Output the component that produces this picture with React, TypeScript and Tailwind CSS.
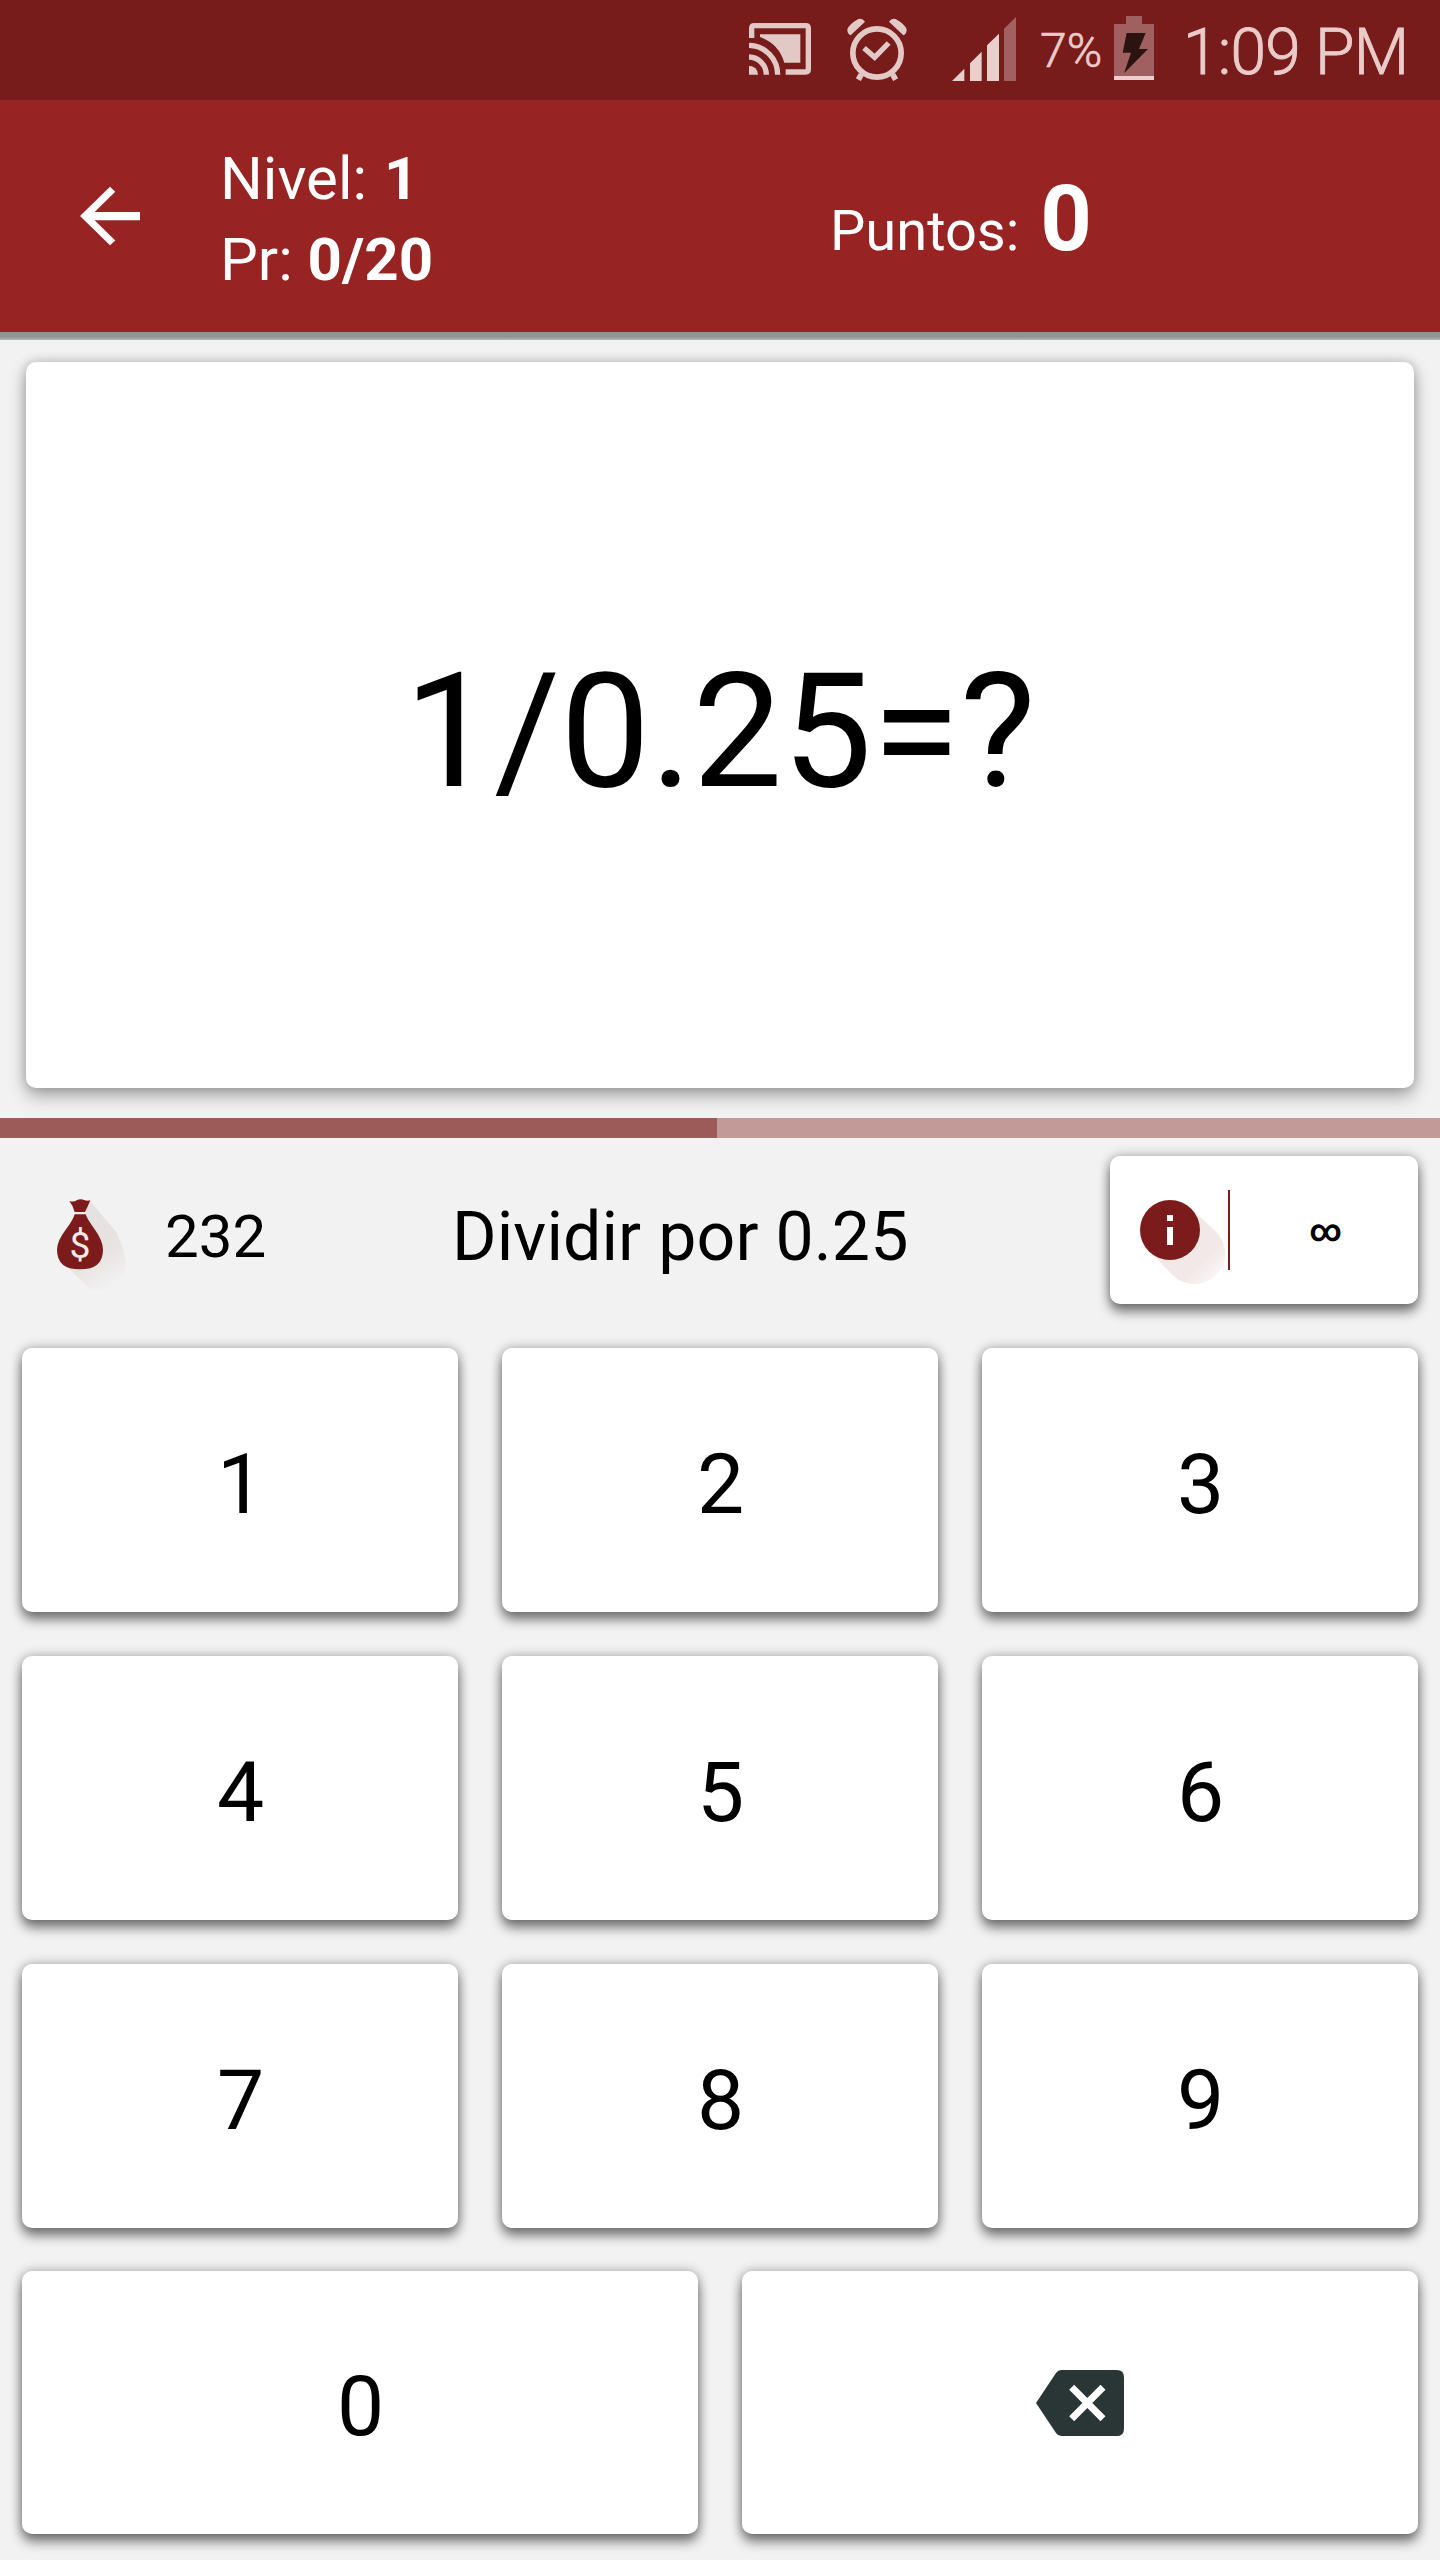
import React, { useState } from 'react';

const CARD = 'bg-white rounded-[10px]';
const RAISED = 'shadow-[0_8px_12px_rgba(0,0,0,0.46),0_0_12px_rgba(0,0,0,0.3)]';

const CastIcon: React.FC = () => (
    <svg className="w-[62px] h-[52px]" viewBox="57 70 186 156" fill="none" stroke="#e3c9c6" strokeWidth="16">
        <path d="M65 115V86q0-8 8-8h154q8 0 8 8v123q0 8-8 8h-60" />
        <path d="M90 104h121v85h-48Q146 132 90 112z" fill="#e3c9c6" stroke="none" />
        <path d="M57 198a27 27 0 0 1 27 27H57z" fill="#e3c9c6" stroke="none" />
        <path d="M57 172a53 53 0 0 1 52 53M57 137a88 88 0 0 1 86 88" />
    </svg>
);

const AlarmIcon: React.FC = () => (
    <svg className="w-[60px] h-[63px]" viewBox="351 53 180 189" fill="none" stroke="#e3c9c6">
        <circle cx="441" cy="158" r="72.5" strokeWidth="17" />
        <path d="M402 143l32 28 42-43" strokeWidth="16" />
        <path d="M394 222l-9 16M488 222l9 16" strokeWidth="17" />
        <path d="M352 87q5-15 33-31q12-4 20 8l-43 41q-10-3-10-18zM530 87q-5-15-33-31q-12-4-20 8l43 41q10-3 10-18z" fill="#e3c9c6" stroke="none" />
    </svg>
);

const SignalIcon: React.FC = () => (
    <svg className="w-[64px] h-[64px]" viewBox="666 51 192 192" fill="#e9cfcc">
        <path d="M666 243l37-37v37zM720 243v-53l35-35v88zM771 243V136l36-35v142z" />
        <path d="M822 243V86l36-35v192z" fill="#a16161" />
    </svg>
);

const BatteryIcon: React.FC = () => (
    <svg className="w-[40px] h-[64px]" viewBox="252 48 120 192">
        <path d="M288 48h48v24h36v156H252V72h36z" fill="#a06060" />
        <path d="M252 228h120v12H252z" fill="#ecd0cf" />
        <path d="M290 99h57l-20 48h27l-72 73 21-62h-25z" fill="#2b1410" />
    </svg>
);

const BackIcon: React.FC = () => (
    <svg className="w-[60px] h-[60px]" viewBox="4 4 16 16" fill="#fff">
        <path d="M20 10.900H7.900l5.500-5.400L12 4.200l-8 7.800 8 7.800 1.400-1.300L7.900 13.100H20z" />
    </svg>
);

const MoneyBagIcon: React.FC = () => (
    <svg className="w-[76px] h-[100px]" viewBox="165 410 228 300">
        <defs>
            <linearGradient id="bag" gradientUnits="userSpaceOnUse" x1="260" y1="530" x2="345" y2="670">
                <stop offset="0.2" stopColor="#e6e2e0" />
                <stop offset="0.5" stopColor="#e9e5e3" />
                <stop offset="1" stopColor="#f2f2f2" />
            </linearGradient>
        </defs>
        <path d="M270 422l78 92q30 60 30 110-16 66-76 68-20 2-36-10l-76-74z" fill="url(#bag)" />
        <path d="M208 422q14 4 22-2 12-6 24 0 9 2 17 0-7 18-16 35h-31q-4-18-16-33z" fill="#7b1b1b" />
        <path d="M224 462h33q4 14 28 46 24 34 24 60 0 59-69 59t-69-59q0-26 26-60 22-28 27-46z" fill="#7b1b1b" />
        <path d="M223 457.500h35" stroke="#f6e9e8" strokeWidth="5" />
        <text x="240" y="594" fontSize="112" fill="#f6e9e8" textAnchor="middle" className="font-['Roboto']">$</text>
    </svg>
);

const InfoIcon: React.FC = () => (
    <svg className="w-[88px] h-[90px]" viewBox="150 360 264 270">
        <defs>
            <linearGradient id="info" gradientUnits="userSpaceOnUse" x1="250" y1="460" x2="385" y2="595">
                <stop offset="0.65" stopColor="#f2e8e7" />
                <stop offset="1" stopColor="#fbf9f8" />
            </linearGradient>
        </defs>
        <path d="M304 386l72 67a90 90 0 0 1-125 135l-74-74z" fill="url(#info)" />
        <circle cx="240" cy="450" r="90" fill="#7b1b1b" />
        <path d="M231 405h18v18h-18zM231 441h18v54h-18z" fill="#fff" />
    </svg>
);

const BackspaceIcon: React.FC = () => (
    <svg className="w-[88px] h-[66px]" viewBox="108 90 264 198">
        <path d="M108 189l60-90q6-9 16-9h166q22 0 22 22v154q0 22-22 22H184q-10 0-16-9z" fill="#293635" />
        <path d="M215 142l94 94M309 142l-94 94" stroke="#fff" strokeWidth="21" />
    </svg>
);

const Key: React.FC<{ className?: string; label: string; onPress: () => void; children?: React.ReactNode }> = ({ className = '', label, onPress, children }) => (
    <button
        onClick={onPress}
        aria-label={label}
        className={`${CARD} ${RAISED} ${className} flex items-center justify-center text-[84px] leading-none`}
    >
        {children ?? <span className="pt-[9px] pl-[1px]">{label}</span>}
    </button>
);

const App: React.FC = () => {
    const [answer, setAnswer] = useState('');

    const press = (digit: string) => setAnswer(answer + digit);

    return (
        <div className="w-[1440px] h-[2560px] flex flex-col overflow-hidden bg-[#f2f2f2] text-black font-['Roboto',sans-serif]">
            <div className="h-[100px] shrink-0 bg-[#781b1b] text-[#e9cbc9] flex items-start justify-end pr-[30px] whitespace-nowrap">
                <div className="mt-[23px] mr-[36px]"><CastIcon /></div>
                <div className="mt-[18px] mr-[45px]"><AlarmIcon /></div>
                <div className="mt-[17px] mr-[24px]"><SignalIcon /></div>
                <span className="w-[74px] mt-[21px] text-[48px] leading-[60px] font-light [-webkit-text-stroke:0.7px]">7%</span>
                <div className="mt-[16px] mr-[29px]"><BatteryIcon /></div>
                <span className="w-[227px] mt-[13px] text-[64px] leading-[80px] font-light tracking-[-0.7px] [-webkit-text-stroke:0.9px]">1:09 PM</span>
            </div>

            <header className="h-[232px] shrink-0 bg-[#972323] text-white flex items-start pl-[80px]">
                <button className="mt-[86px]" aria-label="Volver"><BackIcon /></button>
                <div className="w-[610px] ml-[80px] mt-[38px] text-[60px] leading-[81px]">
                    <p>Nivel: <b className="ml-[2px]">1</b></p>
                    <p>Pr: <b>0/20</b></p>
                </div>
                <div className="mt-[70px] flex items-baseline gap-[21px] text-[56px] leading-[100px]">
                    <span>Puntos:</span>
                    <b className="text-[90px]">0</b>
                </div>
            </header>
            <div className="h-[8px] shrink-0 bg-linear-to-b from-[#8f9592] from-60% to-[#b5b8b6]"></div>

            <main className={`${CARD} shadow-[0_8px_18px_rgba(0,0,0,0.3),0_0_12px_rgba(0,0,0,0.2)] h-[726px] shrink-0 mt-[22px] mx-[26px] pt-[14px] flex items-center justify-center text-[160px]`}>
                {answer === '' ? '1/0.25=?' : `1/0.25=${answer}`}
            </main>

            <div className="h-[20px] shrink-0 mt-[30px] bg-[#c29b99]">
                <div className="h-full w-[717px] bg-[#9c5a58]"></div>
            </div>

            <div className="h-[148px] shrink-0 mt-[18px] pl-[55px] pr-[22px] flex items-center">
                <div className="w-[76px] mt-[33px]"><MoneyBagIcon /></div>
                <span className="w-[287px] ml-[34px] mt-[13px] text-[60px]">232</span>
                <span className="mt-[14px] mr-auto text-[68px] tracking-[0.1px]">Dividir por 0.25</span>
                <div className={`${CARD} ${RAISED} w-[308px] h-[148px] flex items-center`}>
                    <div className="ml-[30px] mt-[30px]"><InfoIcon /></div>
                    <div className="w-[2px] h-[80px] bg-[#7b1b1b]"></div>
                    <span className="grow pl-[3px] pt-[2px] text-center text-[31px] font-bold">∞</span>
                </div>
            </div>

            <div className="mt-[44px] mx-[22px] grid grid-cols-3 gap-[44px]">
                {['1', '2', '3', '4', '5', '6', '7', '8', '9'].map(digit => (
                    <Key key={digit} label={digit} onPress={() => press(digit)} className="h-[264px]" />
                ))}
            </div>
            <div className="mt-[43px] mx-[22px] grid grid-cols-2 gap-[44px]">
                <Key label="0" onPress={() => press('0')} className="h-[263px]" />
                <Key label="Borrar" onPress={() => setAnswer(answer.slice(0, -1))} className="h-[263px]">
                    <BackspaceIcon />
                </Key>
            </div>
        </div>
    );
};

export default App;
